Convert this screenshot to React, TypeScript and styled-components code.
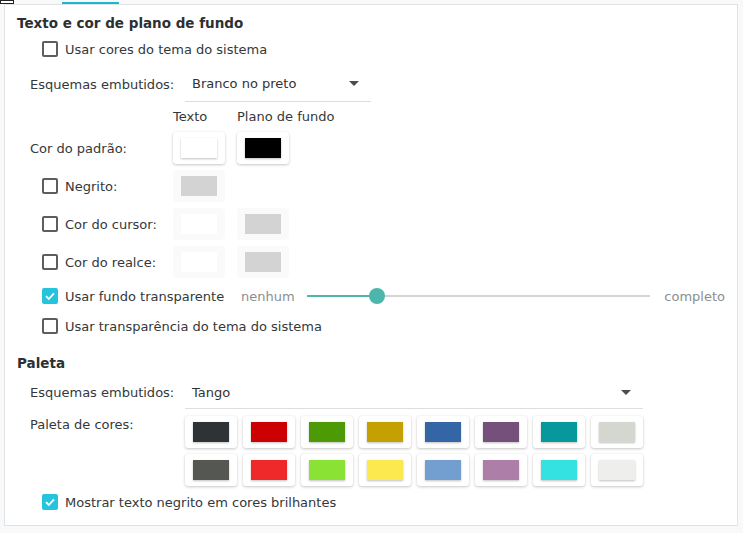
import styled, { createGlobalStyle } from "styled-components";

const GlobalStyle = createGlobalStyle`
  html, body {
    margin: 0;
    padding: 0;
    background: #f8f9fb;
  }
  body {
    font-family: "DejaVu Sans", "Liberation Sans", sans-serif;
    font-size: 13px;
    color: #34383b;
  }
`;

const Page = styled.div`
  width: 743px;
  height: 533px;
  box-sizing: border-box;
  display: flex;
  flex-direction: column;
`;

const TopStrip = styled.div`
  height: 4px;
  display: flex;
  align-items: flex-start;
`;

const Stub = styled.div`
  width: 14px;
  height: 4px;
  box-sizing: border-box;
  border: 1px solid #222;
  background: #fff;
`;

const TabIndicator = styled.div`
  width: 57px;
  height: 2px;
  margin: 2px 0 0 48px;
  background: #1ab7d0;
`;

const Panel = styled.div`
  margin: 0 5px 0 4px;
  height: 522px;
  box-sizing: border-box;
  background: #fff;
  border: 1px solid #e2e3e5;
  padding: 6px 12px 0 12px;
  display: flex;
  flex-direction: column;
`;

const Heading = styled.div<{ $top?: number }>`
  height: 24px;
  line-height: 24px;
  font-size: 13.5px;
  font-weight: bold;
  color: #2c3033;
  margin-top: ${(p) => p.$top ?? 0}px;
`;

const CheckRow = styled.label<{ $top?: number }>`
  height: 28px;
  display: flex;
  align-items: center;
  padding-left: 25px;
  gap: 7px;
  margin-top: ${(p) => p.$top ?? 0}px;
`;

const Box = styled.span<{ $on?: boolean }>`
  width: 16px;
  height: 16px;
  box-sizing: border-box;
  border-radius: 2px;
  flex: none;
  display: flex;
  align-items: center;
  justify-content: center;
  border: ${(p) => (p.$on ? "none" : "2px solid #5b5f62")};
  background: ${(p) => (p.$on ? "#26c4dc" : "#fff")};
`;

const SelectRow = styled.div<{ $h: number; $top?: number }>`
  height: ${(p) => p.$h}px;
  display: flex;
  align-items: center;
  padding-left: 13px;
  margin-top: ${(p) => p.$top ?? 0}px;
`;

const RowLabel = styled.span`
  width: 155px;
  flex: none;
`;

const Select = styled.div<{ $w: number }>`
  width: ${(p) => p.$w}px;
  height: 100%;
  box-sizing: border-box;
  border-bottom: 1px solid #dedede;
  display: flex;
  align-items: center;
  justify-content: space-between;
  padding: 0 12px 0 7px;
  color: #333;
`;

const Arrow = styled.span`
  width: 0;
  height: 0;
  border-left: 5px solid transparent;
  border-right: 5px solid transparent;
  border-top: 5px solid #4a4d50;
`;

const ColorTable = styled.div`
  display: grid;
  grid-template-columns: 131px 52px 52px;
  column-gap: 12px;
  row-gap: 6px;
  margin-left: 13px;
  margin-top: 4px;
  align-items: center;
`;

const ColHead = styled.div`
  height: 22px;
  line-height: 22px;
  white-space: nowrap;
  margin-bottom: -2px;
`;

const CellLabel = styled.label<{ $indent?: boolean }>`
  height: 32px;
  display: flex;
  align-items: center;
  gap: 7px;
  padding-left: ${(p) => (p.$indent ? 12 : 0)}px;
  white-space: nowrap;
`;

const Swatch = styled.button<{ $off?: boolean }>`
  width: 52px;
  height: 32px;
  padding: 0;
  border: none;
  border-radius: 3px;
  display: flex;
  align-items: center;
  justify-content: center;
  background: ${(p) => (p.$off ? "#fafafa" : "#fff")};
  box-shadow: ${(p) =>
    p.$off ? "none" : "0 1px 3px rgba(0,0,0,0.22), 0 0 1px rgba(0,0,0,0.08)"};
`;

const Chip = styled.span<{ $c: string; $off?: boolean }>`
  width: 36px;
  height: 20px;
  background: ${(p) => p.$c};
  box-shadow: ${(p) => (p.$off ? "none" : "0 1px 2px rgba(0,0,0,0.25)")};
`;

const SliderRow = styled.div`
  height: 28px;
  display: flex;
  align-items: center;
  margin-top: 4px;
`;

const SliderCheck = styled(CheckRow)`
  width: 199px;
  flex: none;
`;

const Hint = styled.span`
  color: #8b8e91;
`;

const Track = styled.div`
  flex: 1;
  height: 2px;
  margin: 0 14px 0 12px;
  background: #d4d4d4;
  position: relative;
`;

const Fill = styled.div`
  height: 100%;
  background: #4db6ac;
`;

const Thumb = styled.div`
  position: absolute;
  top: -7px;
  width: 16px;
  height: 16px;
  margin-left: -8px;
  border-radius: 50%;
  background: #4db6ac;
`;

const PaletteRow = styled.div`
  display: flex;
  padding-left: 13px;
  margin-top: 7px;
`;

const PaletteLabel = styled.span`
  width: 155px;
  flex: none;
  padding-top: 1px;
`;

const PaletteGrid = styled.div`
  display: grid;
  grid-template-columns: repeat(8, 52px);
  gap: 6px;
`;

const Check = () => (
  <svg width="12" height="12" viewBox="0 0 12 12">
    <path d="M2 6.2 L4.8 9 L10 3.4" fill="none" stroke="#fff" strokeWidth="1.8" />
  </svg>
);

const tango = [
  "#2e3436", "#cc0000", "#4e9a06", "#c4a000", "#3465a4", "#75507b", "#06989a", "#d3d7cf",
  "#555753", "#ef2929", "#8ae234", "#fce94f", "#729fcf", "#ad7fa8", "#34e2e2", "#eeeeec",
];

export default function App() {
  const level = 0.205;
  return (
    <Page>
      <GlobalStyle />
      <TopStrip>
        <Stub />
        <TabIndicator />
      </TopStrip>
      <Panel>
        <Heading>Texto e cor de plano de fundo</Heading>
        <CheckRow>
          <Box />
          Usar cores do tema do sistema
        </CheckRow>
        <SelectRow $h={36} $top={3}>
          <RowLabel>Esquemas embutidos:</RowLabel>
          <Select $w={186}>
            Branco no preto
            <Arrow />
          </Select>
        </SelectRow>

        <ColorTable>
          <div />
          <ColHead>Texto</ColHead>
          <ColHead>Plano de fundo</ColHead>

          <CellLabel>Cor do padrão:</CellLabel>
          <Swatch><Chip $c="#ffffff" /></Swatch>
          <Swatch><Chip $c="#000000" /></Swatch>

          <CellLabel $indent><Box />Negrito:</CellLabel>
          <Swatch $off><Chip $off $c="#d3d3d3" /></Swatch>
          <div />

          <CellLabel $indent><Box />Cor do cursor:</CellLabel>
          <Swatch $off><Chip $off $c="#ffffff" /></Swatch>
          <Swatch $off><Chip $off $c="#d3d3d3" /></Swatch>

          <CellLabel $indent><Box />Cor do realce:</CellLabel>
          <Swatch $off><Chip $off $c="#ffffff" /></Swatch>
          <Swatch $off><Chip $off $c="#d3d3d3" /></Swatch>
        </ColorTable>

        <SliderRow>
          <SliderCheck>
            <Box $on><Check /></Box>
            Usar fundo transparente
          </SliderCheck>
          <Hint>nenhum</Hint>
          <Track>
            <Fill style={{ width: `${level * 100}%` }} />
            <Thumb style={{ left: `${level * 100}%` }} />
          </Track>
          <Hint>completo</Hint>
        </SliderRow>
        <CheckRow $top={2}>
          <Box />
          Usar transparência do tema do sistema
        </CheckRow>

        <Heading $top={11}>Paleta</Heading>
        <SelectRow $h={33} $top={1}>
          <RowLabel>Esquemas embutidos:</RowLabel>
          <Select $w={458}>
            Tango
            <Arrow />
          </Select>
        </SelectRow>
        <PaletteRow>
          <PaletteLabel>Paleta de cores:</PaletteLabel>
          <PaletteGrid>
            {tango.map((c, i) => (
              <Swatch key={i}><Chip $c={c} /></Swatch>
            ))}
          </PaletteGrid>
        </PaletteRow>
        <CheckRow $top={2}>
          <Box $on><Check /></Box>
          Mostrar texto negrito em cores brilhantes
        </CheckRow>
      </Panel>
    </Page>
  );
}
